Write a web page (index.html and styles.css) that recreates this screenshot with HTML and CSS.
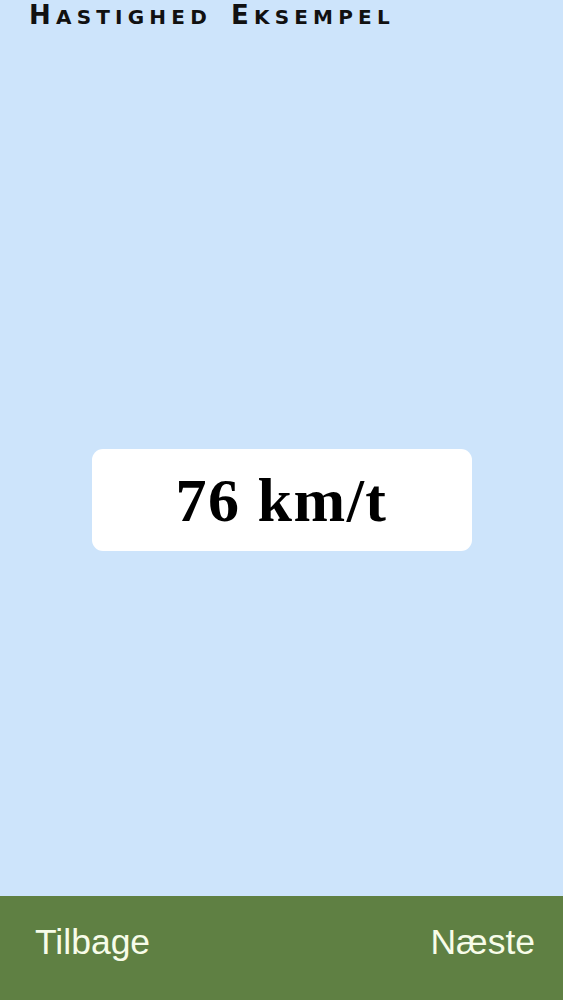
FILE: index.html
```html
<!DOCTYPE html>
<html lang="da">
<head>
<meta charset="utf-8">
<link rel="stylesheet" href="styles.css">
</head>
<body>
<div class="screen">
  <header class="title"><span class="word">H<span class="sc">astighed</span></span><span class="word">E<span class="sc">ksempel</span></span></header>
  <main class="content">
    <div class="card">76 km/t</div>
  </main>
  <footer class="bar">
    <span class="nav">Tilbage</span>
    <span class="nav">Næste</span>
  </footer>
</div>
</body>
</html>
```
FILE: styles.css
```css
html, body {
  margin: 0;
  padding: 0;
}
body {
  background: #cde4fb;
}
.screen {
  height: 1000px;
  display: flex;
  flex-direction: column;
}
.title {
  padding: 0 0 0 29px;
  height: 30px;
  display: flex;
  align-items: baseline;
  gap: 19px;
  font-family: "DejaVu Sans", sans-serif;
  font-weight: bold;
  font-size: 26px;
  line-height: 30px;
  letter-spacing: 5.2px;
  color: #111;
}
.sc {
  font-size: 20px;
  text-transform: uppercase;
}
.content {
  flex: 1;
  display: flex;
  align-items: center;
  justify-content: center;
  padding-top: 74px;
}
.card {
  width: 380px;
  height: 102px;
  background: #fff;
  border-radius: 11px;
  display: flex;
  align-items: center;
  justify-content: center;
  font-family: "Liberation Serif", serif;
  font-weight: bold;
  font-size: 62px;
  letter-spacing: 1.5px;
  color: #000;
}
.bar {
  height: 104px;
  background: #5f8043;
  display: flex;
  align-items: center;
  justify-content: space-between;
  padding: 0 28px 12px 35px;
  box-sizing: border-box;
}
.nav {
  font-family: "Liberation Sans", sans-serif;
  font-size: 35.5px;
  color: #f7fce9;
}
```
